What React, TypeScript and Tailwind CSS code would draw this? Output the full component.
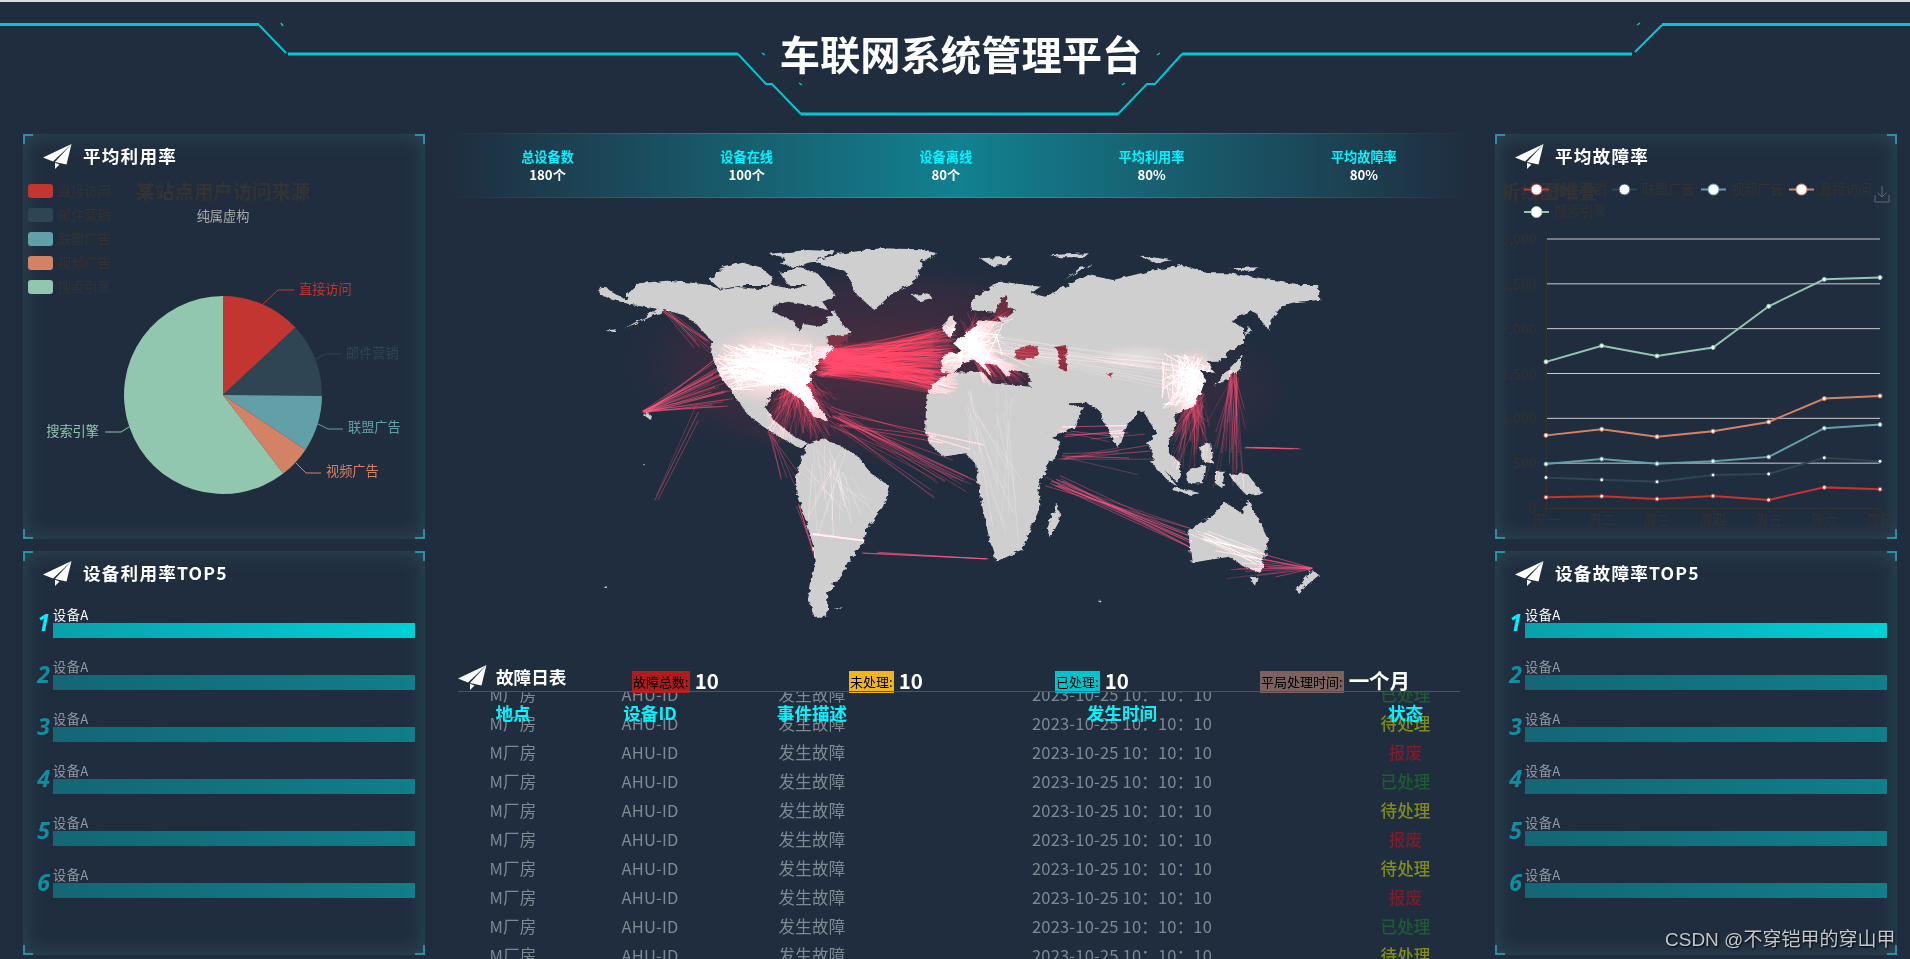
const FONT = "font-['Noto_Sans_CJK_SC','Noto_Sans',sans-serif]";

const PIE = [
  { name: "直接访问", value: 335, color: "#c23531" },
  { name: "邮件营销", value: 310, color: "#2f4554" },
  { name: "联盟广告", value: 234, color: "#61a0a8" },
  { name: "视频广告", value: 135, color: "#d48265" },
  { name: "搜索引擎", value: 1548, color: "#91c7ae" },
];

const PIE_LABELS = [
  { i: 0, x: 299, y: 289, anchor: "start", line: "263,304 278,290 294,290" },
  { i: 1, x: 346, y: 353, anchor: "start", line: "316,359 325,354 341,354" },
  { i: 2, x: 348, y: 427, anchor: "start", line: "318,424 328,429 343,429" },
  { i: 3, x: 326, y: 471, anchor: "start", line: "296,463 306,473 321,473" },
  { i: 4, x: 99, y: 431, anchor: "end", line: "129,427 121,432 105,432" },
];

const SERIES = [
  { color: "#c23531", data: [120, 132, 101, 134, 90, 230, 210] },
  { color: "#2f4554", data: [340, 314, 292, 368, 380, 560, 520] },
  { color: "#61a0a8", data: [490, 546, 493, 522, 570, 890, 930] },
  { color: "#d48265", data: [810, 878, 794, 856, 960, 1220, 1250] },
  { color: "#91c7ae", data: [1630, 1810, 1695, 1790, 2250, 2550, 2570] },
];

const LAND = [
  // north america
  "40,170 55,172 60,180 95,210 100,190 120,160 180,152 230,158 268,165 290,180 330,172 372,178 395,165 440,178 470,165 510,180 528,198 500,215 512,240 475,226 430,215 400,225 396,246 440,272 452,305 460,282 498,290 510,268 525,240 542,285 556,300 548,325 508,338 525,352 498,388 482,420 470,470 490,522 512,574 482,560 458,510 425,478 395,485 382,530 398,568 440,618 470,640 455,655 420,628 380,592 345,552 318,495 290,440 272,372 270,330 240,282 215,256 175,240 140,265 90,296 133,262 160,236 110,226 85,216 40,195",
  "268,150 290,115 335,98 372,112 395,140 395,165 340,165 290,178",
  "388,72 470,60 528,64 486,92 440,112 412,100 425,86",
  "412,128 455,112 490,130 525,190 500,195 470,165 430,165",
  // greenland, iceland
  "482,95 530,72 620,55 700,58 737,70 705,95 695,150 645,190 607,240 572,195 548,125",
  "685,195 720,190 725,205 700,213",
  // south america
  "470,640 500,625 540,650 575,680 600,730 640,770 625,830 590,900 585,940 555,990 540,1030 510,1090 510,1160 485,1160 470,1110 485,1000 480,940 450,800 445,750 455,690",
  // africa, madagascar
  "715,495 735,450 765,428 830,425 850,460 930,470 960,610 995,640 960,720 945,770 950,830 910,960 860,995 845,930 830,830 815,700 795,670 750,680 720,640 712,600",
  "985,820 990,870 970,925 962,890",
  // eurasia
  "748,375 790,365 770,340 790,320 830,270 870,275 855,245 805,240 810,205 870,155 950,170 930,190 960,200 1000,170 1050,135 1100,150 1170,125 1240,105 1300,130 1340,130 1430,150 1480,165 1525,165 1525,210 1480,215 1450,225 1425,270 1420,300 1395,250 1380,240 1345,275 1370,295 1370,340 1340,365 1320,395 1295,395 1310,430 1280,420 1290,450 1280,490 1265,530 1225,550 1230,590 1215,620 1215,670 1240,700 1235,760 1190,700 1170,640 1190,610 1160,540 1125,590 1110,655 1090,600 1070,540 1045,518 1005,520 985,480 1010,525 1040,530 1020,590 965,625 930,520 930,470 925,430 890,420 880,440 860,405 835,400 850,440 815,390 790,400 770,430 745,425",
  // islands
  "745,290 770,255 775,300 760,320",
  "825,85 890,80 880,105 850,108",
  "970,75 1050,70 1040,82 990,82",
  "1000,150 1030,115 1060,105 1020,130",
  "1150,75 1220,90 1190,100",
  "1340,115 1400,112 1380,125",
  "1370,320 1380,290 1385,300",
  "1370,375 1360,420 1310,470 1330,430 1350,400",
  "1185,680 1230,765 1215,755 1180,700",
  "1225,770 1280,790 1260,795 1222,780",
  "1250,725 1290,705 1285,760 1255,760",
  "1275,650 1300,640 1305,700 1285,695",
  "1310,725 1330,725 1325,775 1310,760",
  "1340,735 1375,730 1410,790 1375,795 1355,765",
  // australia, tasmania, new zealand
  "1255,900 1300,860 1330,815 1365,850 1380,810 1420,930 1405,1030 1370,1010 1340,980 1262,998",
  "1382,1040 1398,1042 1392,1070",
  "1510,1020 1525,1035 1500,1065 1482,1095 1480,1075",
  // specks
  "132,555 145,553 142,566",
  "48,1072 56,1069 55,1075",
  "128,702 136,702 134,706",
  "1068,1112 1076,1112 1074,1118",
  "525,1135 545,1132 540,1139",
  "50,302 75,298 70,306",
];

const SEAS = [
  { points: "900,360 940,345 950,375 920,388 898,385", fill: "#a23244" },
  { points: "982,350 1003,345 1005,425 985,410 990,385", fill: "#8e2a3e" },
  { points: "1085,430 1100,428 1095,440", fill: "#b13347" },
  { points: "852,262 870,205 882,195 880,232 900,240 885,258", fill: "#6a2f40" },
  { points: "510,320 560,312 548,340 515,350", fill: "#7d3347" },
];

const FLOWS = [
  { n: 300, from: [480, 350, 520, 440], to: [725, 290, 780, 495], color: "#e02535", o: 0.3 },
  { n: 170, from: [420, 420, 480, 480], to: [385, 490, 530, 640], color: "#e02535", o: 0.3 },
  { n: 30, from: [128, 540, 138, 550], to: [270, 380, 335, 530], color: "#e83040", o: 0.55 },
  { n: 22, from: [510, 530, 540, 590], to: [720, 600, 835, 840], color: "#d82538", o: 0.6 },
  { n: 10, from: [170, 236, 182, 245], to: [230, 330, 280, 370], color: "#d82538", o: 0.55 },
  { n: 90, from: [790, 320, 820, 360], to: [830, 405, 930, 470], color: "#e02535", o: 0.35 },
  { n: 40, from: [790, 300, 820, 340], to: [780, 240, 895, 300], color: "#e02535", o: 0.35 },
  { n: 70, from: [1250, 480, 1290, 530], to: [1215, 560, 1300, 720], color: "#e02535", o: 0.32 },
  { n: 26, from: [1340, 420, 1360, 450], to: [1290, 520, 1380, 800], color: "#d82538", o: 0.45 },
  { n: 14, from: [955, 735, 1010, 770], to: [1245, 890, 1265, 955], color: "#e82a45", o: 0.7 },
  { n: 8, from: [985, 670, 1010, 690], to: [1110, 640, 1190, 745], color: "#e82a45", o: 0.6 },
  { n: 6, from: [985, 590, 1060, 630], to: [1090, 570, 1170, 640], color: "#e82a45", o: 0.7 },
  { n: 5, from: [1370, 650, 1390, 655], to: [1460, 655, 1495, 662], color: "#d82538", o: 0.7 },
  { n: 16, from: [1505, 1012, 1512, 1018], to: [1310, 960, 1440, 1050], color: "#e82a45", o: 0.6 },
  { n: 3, from: [470, 910, 490, 915], to: [580, 930, 620, 935], color: "#e82a45", o: 0.8 },
  { n: 4, from: [580, 965, 620, 970], to: [835, 985, 850, 987], color: "#e82a45", o: 0.8 },
  { n: 3, from: [140, 815, 175, 790], to: [240, 580, 270, 520], color: "#d82538", o: 0.55 },
  { n: 4, from: [445, 820, 455, 830], to: [480, 960, 490, 980], color: "#d82538", o: 0.6 },
  { n: 6, from: [370, 590, 400, 620], to: [410, 720, 460, 780], color: "#d82538", o: 0.5 },
  // faint streaks that only show on land
  { n: 140, from: [275, 340, 490, 480], to: [275, 340, 490, 480], color: "#ffb0b4", o: 0.22, land: true },
  { n: 70, from: [745, 280, 860, 420], to: [745, 280, 880, 420], color: "#ffb0b4", o: 0.22, land: true },
  { n: 70, from: [1200, 370, 1300, 540], to: [1200, 370, 1300, 540], color: "#ffb0b4", o: 0.22, land: true },
  { n: 26, from: [760, 300, 820, 360], to: [1200, 400, 1300, 480], color: "#ffb0b4", o: 0.07, land: true },
  { n: 22, from: [450, 640, 560, 760], to: [470, 800, 610, 920], color: "#ffb0b4", o: 0.1, land: true },
  { n: 20, from: [780, 470, 900, 620], to: [800, 650, 920, 950], color: "#ffb0b4", o: 0.07, land: true },
  { n: 14, from: [1260, 900, 1300, 930], to: [1380, 960, 1420, 1010], color: "#ffb0b4", o: 0.15, land: true },
];

const STATUS: Record<string, string> = {
  已处理: "text-[#1b5e30]",
  待处理: "text-[#808c1c]",
  报废: "text-[#7c1d2a]",
};

const ROWS = ["已处理", "待处理", "报废", "已处理", "待处理", "报废", "待处理", "报废", "已处理", "待处理"];

const TABLE_COLS = "grid grid-cols-[130px_144px_180px_440px_127px] text-center";

function buildFlows() {
  let seed = 20231025;
  const rnd = () => {
    seed = (seed * 1664525 + 1013904223) % 4294967296;
    return seed / 4294967296;
  };
  const lines: { x1: number; y1: number; x2: number; y2: number; color: string; o: number; land: boolean }[] = [];
  FLOWS.forEach((f) => {
    for (let i = 0; i < f.n; i++) {
      lines.push({
        x1: f.from[0] + rnd() * (f.from[2] - f.from[0]),
        y1: f.from[1] + rnd() * (f.from[3] - f.from[1]),
        x2: f.to[0] + rnd() * (f.to[2] - f.to[0]),
        y2: f.to[1] + rnd() * (f.to[3] - f.to[1]),
        color: f.color,
        o: f.o * (0.5 + rnd() * 0.7),
        land: !!f.land,
      });
    }
  });
  return lines;
}

function PlaneIcon() {
  return (
    <svg width="29" height="25" viewBox="0 0 29 25" className="shrink-0">
      <path d="M28.5 0 0 13.5l10 4z" fill="#fff" />
      <path d="M28.5 0 12 18l11.5 2.5z" fill="#fff" />
      <path d="M12 18.8v6.2l4.5-4.6z" fill="#fff" />
    </svg>
  );
}

function Panel({ title, height, children }: { title: string; height: string; children: React.ReactNode }) {
  return (
    <div className={`relative flex flex-col shadow-[inset_0_0_22px_rgba(70,120,120,0.42)] ${height}`}>
      <span className="absolute left-0 top-0 h-2.5 w-2.5 border-l-2 border-t-2 border-[#2a8ea4]" />
      <span className="absolute right-0 top-0 h-2.5 w-2.5 border-r-2 border-t-2 border-[#2a8ea4]" />
      <span className="absolute bottom-0 left-0 h-2.5 w-2.5 border-b-2 border-l-2 border-[#2a8ea4]" />
      <span className="absolute bottom-0 right-0 h-2.5 w-2.5 border-b-2 border-r-2 border-[#2a8ea4]" />
      <div className="flex items-center gap-[11px] pl-5 pt-2.5">
        <PlaneIcon />
        <span className="-mt-0.5 text-[17.6px] font-bold leading-[25px] tracking-[1.2px] text-white">{title}</span>
      </div>
      {children}
    </div>
  );
}

function Top5() {
  return (
    <div className="mt-[21px] flex flex-col gap-[21px] pr-2.5">
      {[1, 2, 3, 4, 5, 6].map((n) => (
        <div key={n} className={`flex items-center ${n === 1 ? "" : "opacity-50"}`}>
          <span className="w-[28px] pr-[1px] text-right font-['Open_Sans',sans-serif] text-[23px] font-bold italic leading-none text-[#00f0ff]">
            {n}
          </span>
          <div className="ml-0.5 flex-1">
            <div className="h-4 text-[13.2px] leading-4 tracking-[0.5px] text-white">设备A</div>
            <div className="h-[15px] bg-gradient-to-r from-[#0aa0ab] to-[#00d0d5]" />
          </div>
        </div>
      ))}
    </div>
  );
}

function PieChart() {
  const total = PIE.reduce((s, p) => s + p.value, 0);
  let acc = 0;
  const cx = 223;
  const cy = 395;
  const r = 99;
  return (
    <svg viewBox="23 169 402 370" className="block h-[370px] w-[402px]">
      {PIE.map((p, i) => (
        <g key={p.name}>
          <rect x="28" y={184 + i * 24} width="25" height="14" rx="3" fill={p.color} />
          <text x="58" y={196 + i * 24} fontSize="13.2" fill="#333">
            {p.name}
          </text>
        </g>
      ))}
      <text x="223" y="199" textAnchor="middle" fontSize="19.4" fontWeight="700" fill="#333">
        某站点用户访问来源
      </text>
      <text x="223" y="221" textAnchor="middle" fontSize="13.2" fill="#aaa">
        纯属虚构
      </text>
      {PIE.map((p) => {
        const a0 = (acc / total) * Math.PI * 2;
        acc += p.value;
        const a1 = (acc / total) * Math.PI * 2;
        const x0 = cx + r * Math.sin(a0);
        const y0 = cy - r * Math.cos(a0);
        const x1 = cx + r * Math.sin(a1);
        const y1 = cy - r * Math.cos(a1);
        return (
          <path
            key={p.name}
            d={`M${cx} ${cy}L${x0} ${y0}A${r} ${r} 0 ${a1 - a0 > Math.PI ? 1 : 0} 1 ${x1} ${y1}Z`}
            fill={p.color}
          />
        );
      })}
      {PIE_LABELS.map((l) => (
        <g key={l.i}>
          <polyline points={l.line} fill="none" stroke={PIE[l.i].color} />
          <text x={l.x} y={l.y + 5} fontSize="13.2" fill={PIE[l.i].color} textAnchor={l.anchor as "start" | "end"}>
            {PIE[l.i].name}
          </text>
        </g>
      ))}
    </svg>
  );
}

function LineChart() {
  const xs = [1546, 1601.7, 1657, 1713, 1768.7, 1824.3, 1880];
  const ticks = [0, 500, 1000, 1500, 2000, 2500, 3000];
  const y = (v: number) => 508 - (v / 3000) * 269;
  const legend = [
    { name: "邮件营销", x: 1524, row: 0, c: 0 },
    { name: "联盟广告", x: 1612, row: 0, c: 1 },
    { name: "视频广告", x: 1701, row: 0, c: 2 },
    { name: "直接访问", x: 1789, row: 0, c: 3 },
    { name: "搜索引擎", x: 1524, row: 1, c: 4 },
  ];
  const days = ["周一", "周二", "周三", "周四", "周五", "周六", "周日"];
  return (
    <svg viewBox="1495 169 402 370" className="block h-[370px] w-[402px]">
      <text x="1501" y="199" fontSize="19.4" fontWeight="700" fill="#333">
        折线图堆叠
      </text>
      {legend.map((l) => {
        const ly = 189.5 + l.row * 22.5;
        return (
          <g key={l.name}>
            <line x1={l.x} x2={l.x + 25} y1={ly} y2={ly} stroke={SERIES[l.c].color} strokeWidth="2" />
            <circle cx={l.x + 12.5} cy={ly} r="5.5" fill="#fff" stroke={SERIES[l.c].color} strokeWidth="1" />
            <text x={l.x + 30} y={ly + 4} fontSize="13.2" fill="#333">
              {l.name}
            </text>
          </g>
        );
      })}
      <path d="M1882 186v11m-4.5-4.5 4.5 4.5 4.5-4.5M1875 195v7h14v-7" fill="none" stroke="#666" />
      {ticks.map((t) => (
        <g key={t}>
          {t > 0 && <line x1="1547" x2="1880" y1={y(t)} y2={y(t)} stroke="#ccc" />}
          <line x1="1542" x2="1547" y1={y(t)} y2={y(t)} stroke="#333" />
          <text x="1537" y={y(t) + 5} fontSize="13.2" textAnchor="end" fill="#333" letterSpacing="0.6">
            {t.toLocaleString("en-US")}
          </text>
        </g>
      ))}
      <line x1="1546.5" x2="1546.5" y1="239" y2="508" stroke="#333" />
      <line x1="1546" x2="1880" y1="508.5" y2="508.5" stroke="#333" />
      {xs.map((x, i) => (
        <g key={x}>
          <line x1={x} x2={x} y1="508" y2="513" stroke="#333" />
          <text x={x} y="525" fontSize="13.2" textAnchor="middle" fill="#333">
            {days[i]}
          </text>
        </g>
      ))}
      {SERIES.map((s) => (
        <g key={s.color}>
          <polyline
            points={s.data.map((v, i) => `${xs[i]},${y(v)}`).join(" ")}
            fill="none"
            stroke={s.color}
            strokeWidth="2"
          />
          {s.data.map((v, i) => (
            <circle key={i} cx={xs[i]} cy={y(v)} r="2" fill="#fff" stroke={s.color} />
          ))}
        </g>
      ))}
    </svg>
  );
}

function FlowLines({ lines }: { lines: ReturnType<typeof buildFlows> }) {
  return (
    <>
      {lines.map((l, i) => (
        <line
          key={i}
          x1={l.x1}
          y1={l.y1}
          x2={l.x2}
          y2={l.y2}
          stroke={l.color}
          strokeOpacity={l.o}
          strokeWidth="0.8"
          vectorEffect="non-scaling-stroke"
        />
      ))}
    </>
  );
}

function WorldMap() {
  const lines = buildFlows();
  return (
    <svg viewBox="0 0 1568 1200" preserveAspectRatio="none" className="ml-[132px] mt-8 block h-[400px] w-[760px]">
      <defs>
        <radialGradient id="dark-glow">
          <stop offset="0%" stopColor="#6a2c40" stopOpacity="0.7" />
          <stop offset="70%" stopColor="#4a2a40" stopOpacity="0.42" />
          <stop offset="100%" stopColor="#1f2d3f" stopOpacity="0" />
        </radialGradient>
        <radialGradient id="hot">
          <stop offset="0%" stopColor="#fff" stopOpacity="0.95" />
          <stop offset="55%" stopColor="#ffe4e6" stopOpacity="0.75" />
          <stop offset="100%" stopColor="#ffd0d4" stopOpacity="0" />
        </radialGradient>
        <filter id="coast" x="-5%" y="-5%" width="110%" height="110%">
          <feTurbulence type="fractalNoise" baseFrequency="0.07" numOctaves="3" seed="4" />
          <feDisplacementMap in="SourceGraphic" scale="14" />
        </filter>
        <clipPath id="land-clip">
          {LAND.map((p, i) => (
            <polygon key={i} points={p} />
          ))}
        </clipPath>
      </defs>
      <ellipse cx="620" cy="400" rx="590" ry="340" fill="url(#dark-glow)" />
      <ellipse cx="1310" cy="480" rx="180" ry="200" fill="url(#dark-glow)" opacity="0.35" />
      <g filter="url(#coast)">
        {LAND.map((p, i) => (
          <polygon key={i} points={p} fill="#cfcfcf" />
        ))}
        <g clipPath="url(#land-clip)">
          <ellipse cx="400" cy="410" rx="150" ry="125" fill="url(#hot)" />
          <ellipse cx="470" cy="470" rx="50" ry="120" fill="url(#hot)" />
          <ellipse cx="795" cy="335" rx="70" ry="110" fill="url(#hot)" />
          <ellipse cx="1265" cy="470" rx="65" ry="120" fill="url(#hot)" />
          <ellipse cx="1150" cy="380" rx="90" ry="40" fill="url(#hot)" opacity="0.4" />
        </g>
        {SEAS.map((s) => (
          <polygon key={s.points} points={s.points} fill={s.fill} />
        ))}
      </g>
      <g className="mix-blend-plus-lighter">
        <FlowLines lines={lines.filter((l) => !l.land)} />
        <g clipPath="url(#land-clip)">
          <FlowLines lines={lines.filter((l) => l.land)} />
        </g>
      </g>
    </svg>
  );
}

function Stat({ label, value }: { label: string; value: string }) {
  return (
    <div className="flex flex-col items-center text-[13.2px] font-bold leading-[18px]">
      <span className="text-[#00f5ff]">{label}</span>
      <span className="text-white">{value}</span>
    </div>
  );
}

function Count({ label, value, color }: { label: string; value: string; color: string }) {
  return (
    <div className="flex items-end">
      <span className={`-mb-px flex h-[22px] items-center px-px text-[13px] text-black ${color}`}>{label}</span>
      <span className="ml-[5px] text-[20.5px] font-bold leading-6 text-white">{value}</span>
    </div>
  );
}

export default function App() {
  return (
    <div className={`h-[959px] w-[1910px] overflow-hidden border-t-2 border-[#dedede] bg-[#1f2d3f] ${FONT}`}>
      <div className="relative flex h-[132px] items-start justify-center">
        <svg width="1910" height="132" className="absolute -top-0.5 left-0" fill="none" stroke="#00c8d2">
          <path strokeWidth="3" d="M0 24.5h259M288 54h450M801 114h317M1182 54h450M1662 24.5h248" />
          <path strokeWidth="2" d="M259 25l27 28M738 54l28 30h6l29 30M1118 114l29-30h8l27-30M1635 52l27-27" />
          <path strokeWidth="1.5" d="M281 23l2 3M762 53l3 2M799 83l3 2M1122 85l3-2M1157 55l3-2M1637 25l3-2" />
        </svg>
        <h1 className="relative ml-3 mt-7 text-[40.3px] font-bold leading-[46px] text-white">车联网系统管理平台</h1>
      </div>

      <div className="flex h-[823px] pl-[23px] pr-[13px]">
        <div className="flex w-[402px] flex-col gap-3">
          <Panel title="平均利用率" height="h-[405px]">
            <PieChart />
          </Panel>
          <Panel title="设备利用率TOP5" height="h-[404px]">
            <Top5 />
          </Panel>
        </div>

        <div className="ml-[23px] mr-[25px] w-[1022px]">
          <div className="relative -mt-px flex h-[65px] items-center justify-around bg-gradient-to-r from-transparent via-[#128190] to-transparent">
            <span className="absolute inset-x-0 top-0 h-px bg-gradient-to-r from-transparent via-[#1f98a8] to-transparent" />
            <span className="absolute inset-x-0 bottom-0 h-px bg-gradient-to-r from-transparent via-[#1f98a8] to-transparent" />
            <Stat label="总设备数" value="180个" />
            <Stat label="设备在线" value="100个" />
            <Stat label="设备离线" value="80个" />
            <Stat label="平均利用率" value="80%" />
            <Stat label="平均故障率" value="80%" />
          </div>

          <WorldMap />

          <div className="relative z-10 mt-[37px] grid h-[25px] grid-cols-[174px_217px_206px_205px_1fr] grid-rows-[25px] items-end pl-2.5">
            <span className="absolute inset-x-2.5 bottom-0 h-px bg-[#146c78]" />
            <div className="flex -translate-y-0.5 items-center gap-[9px]">
              <PlaneIcon />
              <span className="-mt-0.5 text-[17.6px] font-bold leading-[25px] text-white">故障日表</span>
            </div>
            <Count label="故障总数:" value="10" color="bg-[#b01c1c]" />
            <Count label="未处理:" value="10" color="bg-[#f0b41c]" />
            <Count label="已处理:" value="10" color="bg-[#00c4cc]" />
            <Count label="平局处理时间:" value="一个月" color="bg-[#7d6060]" />
          </div>

          <div className="relative h-[267px] overflow-hidden">
            <div className={`${TABLE_COLS} absolute inset-x-0 top-[9px] z-10 text-[17.6px] font-bold leading-6 text-[#00f5ff]`}>
              <span>地点</span>
              <span>设备ID</span>
              <span>事件描述</span>
              <span>发生时间</span>
              <span>状态</span>
            </div>
            <div className="-mt-3">
              {ROWS.map((status, i) => (
                <div key={i} className={`${TABLE_COLS} h-[29px] text-[16.5px] leading-[29px] tracking-[0.2px] text-[#7d8993]`}>
                  <span>M厂房</span>
                  <span>AHU-ID</span>
                  <span>发生故障</span>
                  <span>2023-10-25 10：10：10</span>
                  <span className={`font-medium ${STATUS[status]}`}>{status}</span>
                </div>
              ))}
            </div>
          </div>
        </div>

        <div className="flex w-[402px] flex-col gap-3">
          <Panel title="平均故障率" height="h-[405px]">
            <LineChart />
          </Panel>
          <Panel title="设备故障率TOP5" height="h-[404px]">
            <Top5 />
          </Panel>
        </div>
      </div>

      <div className="absolute left-[1665px] top-[927px] font-['Liberation_Sans','Noto_Sans_CJK_SC',sans-serif] text-[19px] leading-[26px] text-[#c3c7cb] [text-shadow:1px_1px_2px_#000]">
        CSDN @不穿铠甲的穿山甲
      </div>
    </div>
  );
}
